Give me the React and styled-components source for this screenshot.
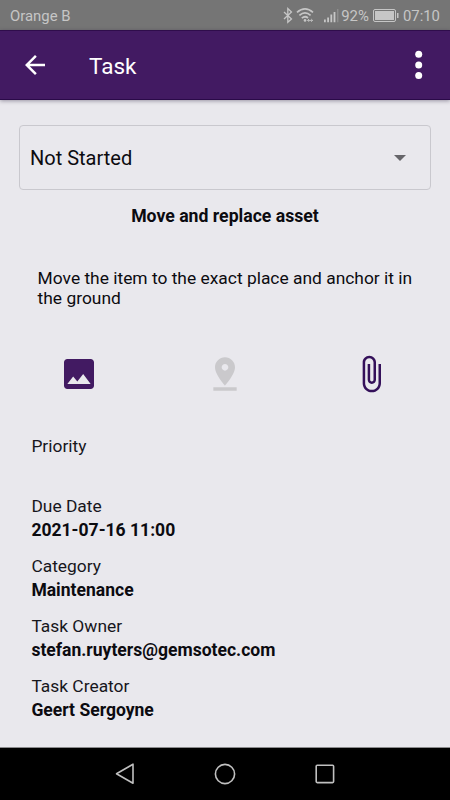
import React, { useState } from 'react';
import styled, { createGlobalStyle } from 'styled-components';

const GlobalStyle = createGlobalStyle`
  * {
    box-sizing: border-box;
  }

  body {
    margin: 0;
    background: #e9e8ed;
    font-family: Roboto, 'Liberation Sans', sans-serif;
  }
`;

const Screen = styled.div`
  display: flex;
  flex-direction: column;
  width: 450px;
  height: 800px;
  overflow: hidden;
  background: #e9e8ed;
  color: #0c0b10;
`;

const StatusBar = styled.div`
  display: flex;
  align-items: center;
  flex: none;
  height: 30px;
  padding: 2px 10px 0;
  background: #757575;
  color: #c6c6c6;
  font-size: 14.9px;
  line-height: 28px;
`;

const Carrier = styled.span`
  margin-right: auto;
`;

const StatusIcon = styled.svg`
  display: block;
  flex: none;
  width: ${({ $w }) => $w}px;
  height: 18px;
  margin-left: ${({ $before }) => $before || 0}px;
  margin-right: ${({ $gap }) => $gap}px;
`;

const AppBar = styled.header`
  display: flex;
  align-items: center;
  flex: none;
  height: 70px;
  padding: 0 11px 0 15px;
  background: #421a62;
  border-top: 1px solid #2f0d4b;
  border-bottom: 1px solid #2a0a48;
  box-shadow: 0 1px 4px rgba(30, 20, 50, 0.4);
  color: #fff;
`;

const IconButton = styled.button`
  display: flex;
  align-items: center;
  justify-content: center;
  width: 40px;
  height: 40px;
  padding: 0;
  border: none;
  background: none;
  color: ${({ $color }) => $color || '#fff'};
`;

const Title = styled.h1`
  flex: 1;
  margin: 2px 0 0 34px;
  font-size: 22.5px;
  font-weight: 400;
  line-height: 30px;
`;

const Content = styled.main`
  flex: 1;
  min-height: 0;
  padding-top: 25px;
`;

const Select = styled.button`
  display: flex;
  align-items: center;
  justify-content: space-between;
  width: 412px;
  height: 65px;
  margin: 0 19px;
  padding: 0 24px 0 10px;
  border: 1px solid #c9c8ce;
  border-radius: 4px;
  background: none;
  color: #0c0b10;
  font-family: inherit;
  font-size: 20px;
`;

const Caret = styled.svg`
  width: 12px;
  height: 6px;
`;

const TaskName = styled.h2`
  margin: 14px 0 0;
  font-size: 17.65px;
  font-weight: 700;
  line-height: 24px;
  text-align: center;
`;

const Description = styled.p`
  margin: 40px 30px 0 37.6px;
  font-size: 17.4px;
  line-height: 20px;
`;

const Actions = styled.div`
  display: grid;
  grid-template-columns: repeat(3, 1fr);
  justify-items: center;
  margin: 46px 6px 0;
`;

const Fields = styled.dl`
  display: flex;
  flex-direction: column;
  gap: 12px;
  margin: 40px 31px 0 31.4px;
  font-size: 17.4px;
  line-height: 24px;
`;

const Label = styled.dt`
  color: #17161c;
`;

const Value = styled.dd`
  height: 24px;
  margin: 0;
  font-size: 17.55px;
  font-weight: 700;
`;

const NavBar = styled.nav`
  display: grid;
  grid-template-columns: repeat(3, 100px);
  justify-content: center;
  justify-items: center;
  align-items: center;
  flex: none;
  height: 53px;
  border-top: 1px solid #8b8b8d;
  background: #000;
`;

const Icon = ({ path, size = 40 }) => (
  <svg width={size} height={size} viewBox="0 0 24 24" fill="currentColor">
    <path d={path} />
  </svg>
);

const icons = {
  image:
    'M21 19V5c0-1.1-.9-2-2-2H5c-1.1 0-2 .9-2 2v14c0 1.1.9 2 2 2h14c1.1 0 2-.9 2-2zM8.5 13.5l2.5 3.01L14.5 12l4.5 6H5l3.5-4.5z',
  pin: 'M18 8c0-3.31-2.69-6-6-6S6 4.69 6 8c0 4.5 6 11 6 11s6-6.5 6-11zm-8 0c0-1.1.9-2 2-2s2 .9 2 2-.89 2-2 2c-1.1 0-2-.9-2-2zM5 20v2h14v-2H5z',
  clip: 'M16.5 6v11.5c0 2.21-1.79 4-4 4s-4-1.79-4-4V5c0-1.38 1.12-2.5 2.5-2.5s2.5 1.12 2.5 2.5v10.5c0 .55-.45 1-1 1s-1-.45-1-1V6H10v9.5c0 1.38 1.12 2.5 2.5 2.5s2.5-1.12 2.5-2.5V5c0-2.21-1.79-4-4-4S7 2.79 7 5v12.5c0 3.04 2.46 5.5 5.5 5.5s5.5-2.46 5.5-5.5V6h-1.5z',
  back: 'M20 11H7.83l5.59-5.59L12 4l-8 8 8 8 1.41-1.41L7.83 13H20v-2z',
};

const fields = [
  { label: 'Priority', value: '' },
  { label: 'Due Date', value: '2021-07-16 11:00' },
  { label: 'Category', value: 'Maintenance' },
  { label: 'Task Owner', value: 'stefan.ruyters@gemsotec.com' },
  { label: 'Task Creator', value: 'Geert Sergoyne' },
];

const Status = () => (
  <StatusBar>
    <Carrier>Orange B</Carrier>
    {/* bluetooth */}
    <StatusIcon $w={10} $gap={3} viewBox="0 0 10 18" fill="none" stroke="currentColor" strokeWidth="1.3">
      <path d="M1 5l7.5 7L4.8 15.3V1.6L8.5 5 1 12" />
    </StatusIcon>
    {/* wifi */}
    <StatusIcon $w={18} $gap={10} viewBox="0 0 18 18" fill="none" stroke="currentColor" strokeWidth="1.7">
      <path d="M1 5.4Q9 -1.6 17 5.4M3.4 8.4Q9 3.4 14.6 8.4M5.8 11.2Q9 8.4 12 11" />
      <circle cx="9" cy="13.4" r="1.3" fill="currentColor" stroke="none" />
      <path d="M11.6 13.4h5M13 12l-1.4 1.4 1.4 1.4M15.2 12l1.4 1.4-1.4 1.4" strokeWidth="0.9" />
    </StatusIcon>
    {/* signal */}
    <StatusIcon $w={15} $gap={2} viewBox="0 0 15 18" fill="currentColor">
      <path d="M0 12.5h1.8v2.7H0zM3.2 10.5H5v4.7H3.2zM6.4 7.5h1.8v7.7H6.4zM9.6 5h1.8v10.2H9.6z" />
      <path d="M13 2h1.4v13.2H13z" opacity="0.3" />
    </StatusIcon>
    <span>92%</span>
    {/* battery */}
    <StatusIcon $w={26} $before={4} $gap={4} viewBox="0 0 26 18">
      <rect x="0.5" y="2.5" width="22" height="12" rx="1.5" fill="none" stroke="currentColor" />
      <rect x="2" y="4" width="19" height="9" fill="currentColor" />
      <path d="M24 6h1.5v5H24z" fill="currentColor" />
    </StatusIcon>
    <span>07:10</span>
  </StatusBar>
);

const App = () => {
  const [status] = useState('Not Started');

  return (
    <>
      <GlobalStyle />
      <Screen>
        <Status />
        <AppBar>
          <IconButton aria-label="Back">
            <Icon path={icons.back} size={30} />
          </IconButton>
          <Title>Task</Title>
          <IconButton aria-label="More">
            <svg width="8" height="30" viewBox="0 0 8 30" fill="currentColor">
              <circle cx="3.7" cy="4.3" r="3.5" />
              <circle cx="3.7" cy="15" r="3.5" />
              <circle cx="3.7" cy="25.6" r="3.5" />
            </svg>
          </IconButton>
        </AppBar>
        <Content>
          <Select>
            {status}
            <Caret viewBox="0 0 12 6" fill="#66656a">
              <path d="M0 0h12L6 6z" />
            </Caret>
          </Select>
          <TaskName>Move and replace asset</TaskName>
          <Description>Move the item to the exact place and anchor it in the ground</Description>
          <Actions>
            <IconButton $color="#421a62" aria-label="Pictures">
              <Icon path={icons.image} />
            </IconButton>
            <IconButton $color="#cac9cc" aria-label="Location">
              <Icon path={icons.pin} />
            </IconButton>
            <IconButton $color="#34105a" aria-label="Attachments">
              <Icon path={icons.clip} />
            </IconButton>
          </Actions>
          <Fields>
            {fields.map(({ label, value }) => (
              <div key={label}>
                <Label>{label}</Label>
                <Value>{value}</Value>
              </div>
            ))}
          </Fields>
        </Content>
        <NavBar>
          <svg width="20" height="22" viewBox="0 0 20 22" fill="none" stroke="#c0c0c0" strokeWidth="1.6" strokeLinejoin="round">
            <path d="M18 1.2v19L1.5 10.8z" />
          </svg>
          <svg width="22" height="22" viewBox="0 0 22 22" fill="none" stroke="#c0c0c0" strokeWidth="1.6">
            <circle cx="11" cy="11" r="9.6" />
          </svg>
          <svg width="20" height="20" viewBox="0 0 20 20" fill="none" stroke="#c0c0c0" strokeWidth="1.6">
            <rect x="1.2" y="1.2" width="17.4" height="17.4" rx="1" />
          </svg>
        </NavBar>
      </Screen>
    </>
  );
};

export default App;
